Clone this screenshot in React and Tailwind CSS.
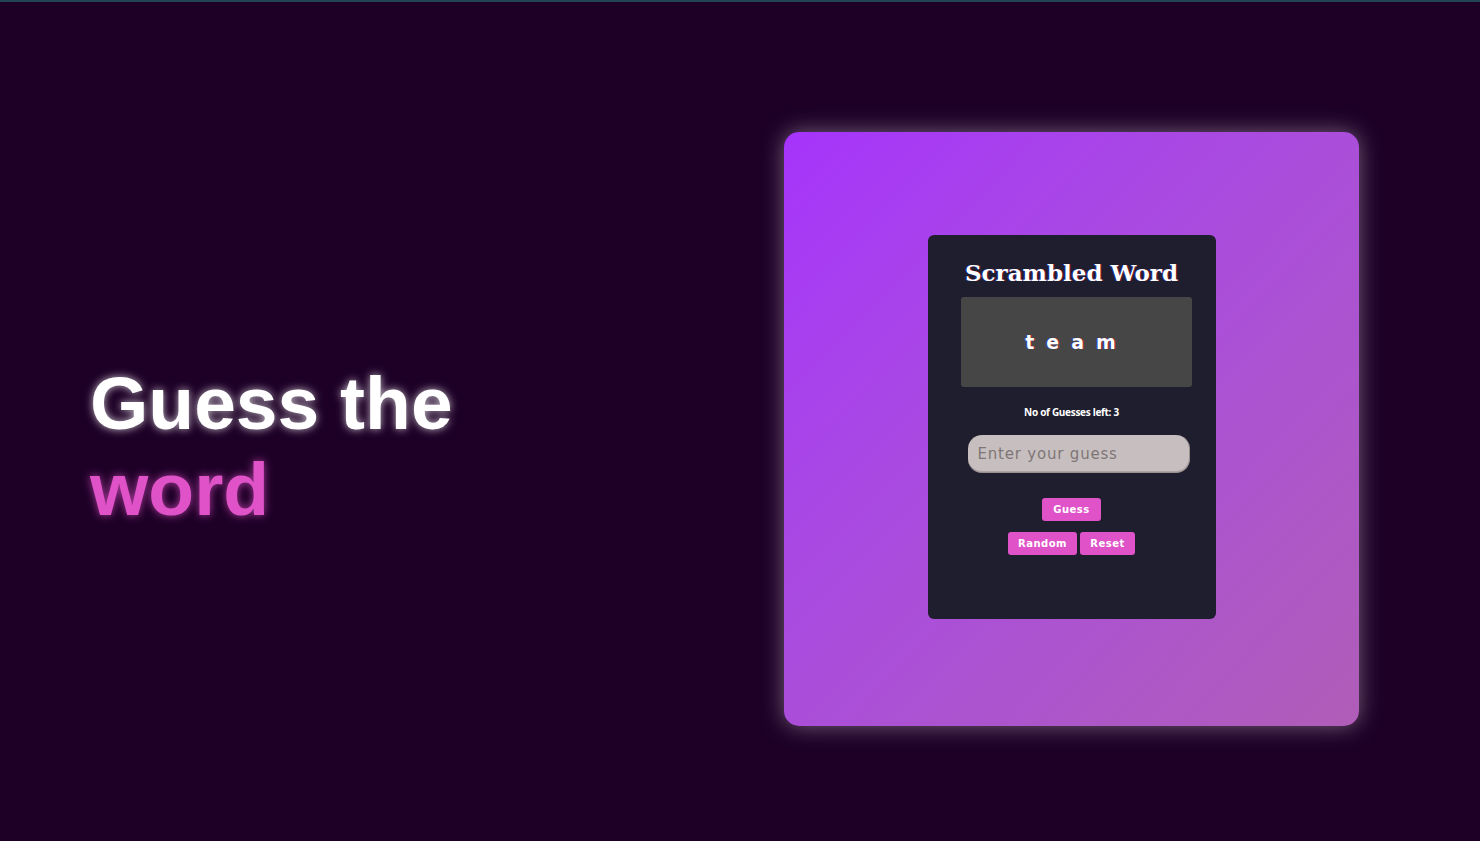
import { useState } from 'react';

export default function App() {
  const [guess, setGuess] = useState('');
  const [left] = useState(3);

  return (
    <div className="min-h-[841px] w-full bg-[#1e0027] border-t-2 border-[#234454]">
      <div className="flex items-start h-[839px]">
        {/* heading */}
        <div className="w-[784px] pl-[90px] pt-[358px]">
          <h1 className="font-['Liberation_Sans',Arial,sans-serif] font-bold text-[75px] leading-[86px] text-white [text-shadow:0_0_8px_rgba(255,255,255,0.75)]">
            Guess the
            <br />
            <span className="text-[#e052c8] [text-shadow:0_0_8px_rgba(224,82,200,0.75)]">word</span>
          </h1>
        </div>

        {/* card */}
        <div className="w-[575px] h-[594px] mt-[130px] rounded-[15px] bg-linear-to-br from-[#a633fb] to-[#b05db8] shadow-[0_0_22px_rgba(220,210,220,0.45)] flex items-start justify-center pt-[103px]">
          <div className="w-[288px] h-[384px] rounded-[6px] bg-[#1f1e2e] flex flex-col items-center pt-[23px]">
            <h2 className="font-['DejaVu_Serif',Georgia,serif] font-bold text-[23px] leading-[30px] text-white [text-shadow:-1px_0_0_rgba(0,60,255,0.5),1px_0_0_rgba(255,0,0,0.4)]">
              Scrambled Word
            </h2>
            <div className="mt-[9px] ml-[10px] w-[231px] h-[90px] rounded-[3px] bg-[#464646] flex items-center justify-center">
              <span className="font-['Comic_Sans_MS','DejaVu_Sans',cursive] font-bold text-[19px] tracking-[12px] text-white [text-shadow:-1px_0_0_rgba(0,60,255,0.6),1px_0_0_rgba(255,0,0,0.5)]">
                team
              </span>
            </div>
            <p className="mt-[18px] font-['Open_Sans','DejaVu_Sans',sans-serif] font-bold text-[10px] tracking-[-0.3px] text-white">
              No of Guesses left: {left}
            </p>
            <input
              type="text"
              value={guess}
              onChange={(e) => setGuess(e.target.value)}
              placeholder="Enter your guess"
              className="mt-[15px] ml-[14px] w-[222px] h-[38px] rounded-[14px] bg-[#c7bfbf] border border-[#9a9090] border-t-0 border-l-0 shadow-[inset_0_-1px_0_rgba(0,0,0,0.15)] px-[10px] font-['DejaVu_Sans',Verdana,sans-serif] text-[15px] tracking-[0.8px] text-[#444] placeholder:text-[#7e7676] outline-none"
            />
            <button className="mt-[25px] w-[59px] h-[23px] rounded-[3px] bg-[#e052c8] font-['DejaVu_Sans',Verdana,sans-serif] font-bold text-[10px] tracking-[0.5px] text-white">
              Guess
            </button>
            <div className="mt-[11px] flex gap-[3px]">
              <button className="w-[69px] h-[23px] rounded-[3px] bg-[#e052c8] font-['DejaVu_Sans',Verdana,sans-serif] font-bold text-[10px] tracking-[0.5px] text-white">
                Random
              </button>
              <button className="w-[55px] h-[23px] rounded-[3px] bg-[#e052c8] font-['DejaVu_Sans',Verdana,sans-serif] font-bold text-[10px] tracking-[0.5px] text-white">
                Reset
              </button>
            </div>
          </div>
        </div>
      </div>
    </div>
  );
}
